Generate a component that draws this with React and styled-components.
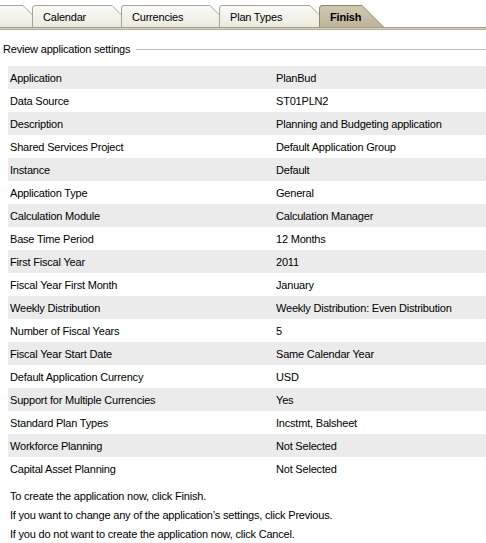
import styled, { createGlobalStyle } from "styled-components";

const GlobalStyle = createGlobalStyle`
  body {
    margin: 0;
    background: #ffffff;
    font-family: "Liberation Sans", Arial, sans-serif;
    font-size: 11px;
    letter-spacing: -0.2px;
    color: #000000;
  }
`;

const Page = styled.div`
  width: 486px;
  height: 543px;
  overflow: hidden;
  background: #ffffff;
`;

const TabStrip = styled.div`
  display: flex;
  align-items: flex-end;
  height: 27px;
  overflow: hidden;
`;

const TabRule = styled.div`
  height: 1px;
  border-top: 1px solid #a39c84;
  border-bottom: 1px solid #b3ac94;
  background: #d8d2c0;
`;

const TabShape = styled.svg`
  position: absolute;
  left: 0;
  top: 0;
`;

const Tab = styled.div`
  position: relative;
  flex: none;
  width: ${(p) => p.$body + 22}px;
  height: 22px;
  margin-left: ${(p) => p.$offset || 0}px;
  margin-right: -13px;
  z-index: ${(p) => p.$order};
`;

const TabLabel = styled.span`
  position: relative;
  display: block;
  padding-left: 11px;
  line-height: 24px;
  font-weight: ${(p) => (p.$active ? 700 : 400)};
  white-space: nowrap;
`;

const Legend = styled.div`
  display: flex;
  align-items: center;
  margin: 12px 0 0 3px;
  height: 14px;
`;

const LegendTitle = styled.span`
  white-space: nowrap;
`;

const LegendLine = styled.div`
  flex: 1;
  height: 1px;
  margin-left: 6px;
  background: #b8bec4;
`;

const SettingsTable = styled.div`
  margin: 10px 0 0 8px;
`;

const Row = styled.div`
  display: grid;
  grid-template-columns: 266px 1fr;
  height: 23px;
  align-items: center;
  background: ${(p) => (p.$shaded ? "#ebebeb" : "#ffffff")};
`;

const Cell = styled.span`
  padding-left: 2px;
  white-space: nowrap;
`;

const Notes = styled.div`
  margin: 7px 0 0 10px;
  line-height: 19px;
`;

const tabs = [
  { label: "", body: 61, offset: -38 },
  { label: "Calendar", body: 80 },
  { label: "Currencies", body: 89 },
  { label: "Plan Types", body: 91 },
  { label: "Finish", body: 43, active: true },
];

const settings = [
  ["Application", "PlanBud"],
  ["Data Source", "ST01PLN2"],
  ["Description", "Planning and Budgeting application"],
  ["Shared Services Project", "Default Application Group"],
  ["Instance", "Default"],
  ["Application Type", "General"],
  ["Calculation Module", "Calculation Manager"],
  ["Base Time Period", "12 Months"],
  ["First Fiscal Year", "2011"],
  ["Fiscal Year First Month", "January"],
  ["Weekly Distribution", "Weekly Distribution: Even Distribution"],
  ["Number of Fiscal Years", "5"],
  ["Fiscal Year Start Date", "Same Calendar Year"],
  ["Default Application Currency", "USD"],
  ["Support for Multiple Currencies", "Yes"],
  ["Standard Plan Types", "Incstmt, Balsheet"],
  ["Workforce Planning", "Not Selected"],
  ["Capital Asset Planning", "Not Selected"],
];

function TabBackground({ body, active }) {
  const w = body + 22;
  const id = active ? "tabActive" : "tabIdle";
  return (
    <TabShape width={w} height={22}>
      <defs>
        <linearGradient id={id} x1="0" y1="0" x2="0" y2="1">
          {active ? (
            <>
              <stop offset="0" stopColor="#d0c9b2" />
              <stop offset="1" stopColor="#bcb498" />
            </>
          ) : (
            <>
              <stop offset="0" stopColor="#fbfaf6" />
              <stop offset="1" stopColor="#ece9df" />
            </>
          )}
        </linearGradient>
      </defs>
      <path
        d={`M0.5 22 V3 Q0.5 0.5 3 0.5 H${body} L${body + 21.5} 22`}
        fill={`url(#${id})`}
        stroke={active ? "#8e8870" : "#a6a397"}
        strokeWidth="1"
      />
    </TabShape>
  );
}

export default function App() {
  return (
    <Page>
      <GlobalStyle />
      <TabStrip>
        {tabs.map((t, i) => (
          <Tab key={i} $body={t.body} $offset={t.offset} $order={i + 1}>
            <TabBackground body={t.body} active={t.active} />
            <TabLabel $active={t.active}>{t.label}</TabLabel>
          </Tab>
        ))}
      </TabStrip>
      <TabRule />
      <Legend>
        <LegendTitle>Review application settings</LegendTitle>
        <LegendLine />
      </Legend>
      <SettingsTable>
        {settings.map(([label, value], i) => (
          <Row key={label} $shaded={i % 2 === 0}>
            <Cell>{label}</Cell>
            <Cell>{value}</Cell>
          </Row>
        ))}
      </SettingsTable>
      <Notes>
        <div>To create the application now, click Finish.</div>
        <div>If you want to change any of the application’s settings, click Previous.</div>
        <div>If you do not want to create the application now, click Cancel.</div>
      </Notes>
    </Page>
  );
}
